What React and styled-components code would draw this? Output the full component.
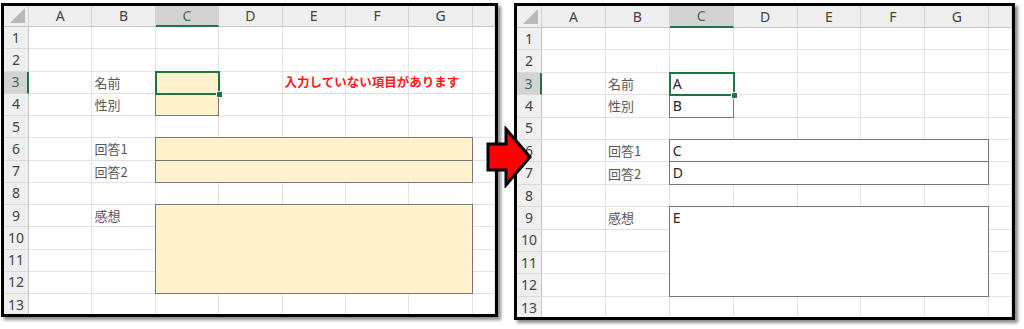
import React from "react";
import styled, { createGlobalStyle } from "styled-components";

const GlobalStyle = createGlobalStyle`
  html, body {
    margin: 0;
    padding: 0;
    background: #ffffff;
  }
  body {
    font-family: "Noto Sans CJK JP", "Noto Sans", sans-serif;
  }
`;

const COLS = ["A", "B", "C", "D", "E", "F", "G", ""];
const ROWS = [1, 2, 3, 4, 5, 6, 7, 8, 9, 10, 11, 12, 13];

const LABELS = { 3: "名前", 4: "性別", 6: "回答1", 7: "回答2", 9: "感想" };

// grid lines: column 1 is the row header, row 1 the column header
const BOXES = [
  { rows: "4 / 5", cols: "4 / 5", value: "A" },
  { rows: "5 / 6", cols: "4 / 5", value: "B" },
  { rows: "7 / 8", cols: "4 / 9", value: "C" },
  { rows: "8 / 9", cols: "4 / 9", value: "D" },
  { rows: "10 / 14", cols: "4 / 9", value: "E" },
];

const Page = styled.div`
  position: relative;
  width: 1024px;
  height: 329px;
  box-sizing: border-box;
  padding: 3px 0 0 1px;
  display: flex;
  align-items: flex-start;
  gap: 16px;
  overflow: hidden;
`;

const Panel = styled.div`
  width: ${(p) => p.$w}px;
  height: ${(p) => p.$h}px;
  box-sizing: border-box;
  border: 3px solid #000;
  box-shadow: 3px 3px 3px rgba(0, 0, 0, 0.45);
  background: #fff;
  overflow: hidden;
  flex: none;
`;

const Sheet = styled.div`
  display: grid;
  grid-template-columns: 25px repeat(7, ${(p) => p.$colW}px) 1fr;
  grid-template-rows: ${(p) => p.$headH}px repeat(13, ${(p) => p.$rowH}px);
  font-size: 13px;
  line-height: 1;
`;

const Corner = styled.div`
  grid-row: 1;
  grid-column: 1;
  position: relative;
  background: #efefef;
  border-right: 1px solid #d2d2d2;
  border-bottom: 1px solid #c4c4c4;

  &::after {
    content: "";
    position: absolute;
    right: 3px;
    bottom: 3px;
    width: 15px;
    height: 15px;
    background: #b9b9b9;
    clip-path: polygon(100% 0, 100% 100%, 0 100%);
  }
`;

const ColHead = styled.div`
  grid-row: 1;
  grid-column: ${(p) => p.$col};
  display: flex;
  align-items: center;
  justify-content: center;
  background: ${(p) => (p.$active ? "#d3d3d3" : "#efefef")};
  color: ${(p) => (p.$active ? "#41704f" : "#444")};
  border-right: 1px solid #d2d2d2;
  border-bottom: ${(p) => (p.$active ? "2px solid #217346" : "1px solid #c4c4c4")};
  font-family: "Noto Sans", sans-serif;
  font-size: 14px;
`;

const RowHead = styled.div`
  grid-row: ${(p) => p.$row};
  grid-column: 1;
  display: flex;
  align-items: center;
  justify-content: center;
  background: ${(p) => (p.$active ? "#d3d3d3" : "#efefef")};
  color: ${(p) => (p.$active ? "#41704f" : "#444")};
  border-right: ${(p) => (p.$active ? "2px solid #217346" : "1px solid #c4c4c4")};
  border-bottom: 1px solid #dadada;
  font-family: "Noto Sans", sans-serif;
  font-size: 14px;
`;

const Cell = styled.div`
  grid-row: ${(p) => p.$row};
  grid-column: ${(p) => p.$col};
  display: flex;
  align-items: center;
  padding-left: 2px;
  border-right: 1px solid #e3e3e3;
  border-bottom: 1px solid #e3e3e3;
  white-space: nowrap;
  overflow: visible;
  color: ${(p) => (p.$alert ? "#ff1a1a" : "#595959")};
  font-weight: ${(p) => (p.$alert ? 700 : 400)};
  font-size: ${(p) => (p.$alert ? "12.5px" : "13px")};
  z-index: ${(p) => (p.$alert ? 2 : 0)};
`;

const Box = styled.div`
  grid-row: ${(p) => p.$rows};
  grid-column: ${(p) => p.$cols};
  margin: -1px 0 0 -1px;
  border: 1px solid #767676;
  background: ${(p) => p.$fill};
  z-index: 1;
  padding-left: 3px;
  line-height: ${(p) => p.$line}px;
  color: #262626;
  font-family: "Noto Sans", sans-serif;
  font-size: 14px;
`;

const Selection = styled.div`
  grid-row: 4;
  grid-column: 4;
  position: relative;
  margin: -1px -1px -1px -1px;
  border: 2px solid #217346;
  z-index: 3;
  pointer-events: none;
`;

const Handle = styled.span`
  position: absolute;
  right: -4px;
  bottom: -4px;
  width: 5px;
  height: 5px;
  background: #217346;
  box-shadow: 0 0 0 1px #fff;
`;

const Arrow = styled.svg`
  position: absolute;
  left: 485px;
  top: 126px;
  z-index: 5;
`;

const Spreadsheet = ({ w, h, colW, headH, rowH, filled, alert }) => (
  <Panel $w={w} $h={h}>
    <Sheet $colW={colW} $headH={headH} $rowH={rowH}>
      <Corner />
      {COLS.map((c, i) => (
        <ColHead key={i} $col={i + 2} $active={c === "C"}>
          {c}
        </ColHead>
      ))}
      {ROWS.map((r) => (
        <React.Fragment key={r}>
          <RowHead $row={r + 1} $active={r === 3}>
            {r}
          </RowHead>
          {COLS.map((c, i) => {
            const isAlert = alert && r === 3 && c === "E";
            return (
              <Cell key={i} $row={r + 1} $col={i + 2} $alert={isAlert}>
                {c === "B" && LABELS[r]}
                {isAlert && "入力していない項目があります"}
              </Cell>
            );
          })}
        </React.Fragment>
      ))}
      {BOXES.map((b) => (
        <Box
          key={b.value}
          $rows={b.rows}
          $cols={b.cols}
          $fill={filled ? "#fff2cc" : "#ffffff"}
          $line={Math.round(rowH) - 1}
        >
          {!filled && b.value}
        </Box>
      ))}
      <Selection>
        <Handle />
      </Selection>
    </Sheet>
  </Panel>
);

export default function App() {
  return (
    <>
      <GlobalStyle />
      <Page>
        <Spreadsheet w={497} h={314} colW={63.4} headH={21} rowH={22.25} filled alert />
        <Spreadsheet w={501} h={317} colW={63.9} headH={22} rowH={22.42} />
        <Arrow width="48" height="62" viewBox="0 0 48 62">
          <polygon
            points="3,18 21,18 21,3 45,31 21,59 21,44 3,44"
            fill="#ff0000"
            stroke="#000"
            strokeWidth="3"
            strokeLinejoin="miter"
          />
        </Arrow>
      </Page>
    </>
  );
}
